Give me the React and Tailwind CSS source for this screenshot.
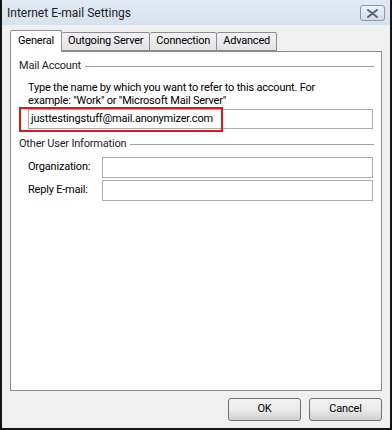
import React from 'react';

const font = { fontFamily: 'Roboto, "Noto Sans", sans-serif' };

function Tab({ label, active }) {
  return active ? (
    <div className="relative z-10 -mb-px h-[22px] px-[7px] border border-b-0 border-[#898c95] bg-white rounded-t-[2px] flex items-center text-[11px] tracking-[-0.2px] text-black">
      {label}
    </div>
  ) : (
    <div className="mt-[2px] h-[19px] px-[6px] border border-[#898c95] border-l-0 bg-gradient-to-b from-[#f2f2f2] to-[#e3e3e3] rounded-t-[2px] flex items-center text-[11px] tracking-[-0.2px] text-black">
      {label}
    </div>
  );
}

function GroupLabel({ children }) {
  return (
    <div className="h-[14px] flex items-center gap-[4px] pr-[7px]">
      <span className="text-[11px] tracking-[-0.2px] leading-[14px] text-[#1e1e1e] whitespace-nowrap">{children}</span>
      <div className="flex-1 h-px bg-[#a0a0a0]" />
    </div>
  );
}

function Field({ label }) {
  return (
    <div className="flex items-center">
      <span className="w-[83px] pl-[9px] text-[11px] tracking-[-0.2px] text-black whitespace-nowrap">{label}</span>
      <div className="flex-1 h-[21px] border border-[#abadb3] bg-white" />
    </div>
  );
}

export default function App() {
  return (
    <div
      className="w-[392px] h-[430px] bg-[#f0f0f0] border-l-2 border-r-2 border-b-2 border-[#141414] flex flex-col overflow-hidden"
      style={font}
    >
      {/* Title bar */}
      <div className="h-[25px] bg-gradient-to-b from-[#e2eaf3] to-[#d7e2ed] flex items-center justify-between pl-[5px] pr-[5px]">
        <span className="text-[12px] text-[#1c1c1c]">Internet E-mail Settings</span>
        <div className="w-[25px] h-[16px] mt-[1px] border border-[#8a96a5] rounded-[3px] bg-gradient-to-b from-[#eef3f8] to-[#d3dde8] flex items-center justify-center">
          <svg width="11" height="9" viewBox="0 0 11 9">
            <path d="M1 1 L10 8 M10 1 L1 8" stroke="#5a6470" strokeWidth="2" strokeLinecap="round" fill="none" />
          </svg>
        </div>
      </div>

      {/* Tabs + panel */}
      <div className="px-[8px] pt-[5px]">
        <div className="flex items-end">
          <Tab label="General" active />
          <Tab label="Outgoing Server" />
          <Tab label="Connection" />
          <Tab label="Advanced" />
        </div>
        <div className="h-[340px] w-[372px] border border-[#898c95] bg-white pl-[8px] pt-[7px]">
          <GroupLabel>Mail Account</GroupLabel>
          <div className="pl-[9px] pr-[8px] pt-[8px]">
            <p className="text-[11px] tracking-[-0.2px] leading-[13px] text-black whitespace-nowrap">
              Type the name by which you want to refer to this account. For
              <br />
              example: "Work" or "Microsoft Mail Server"
            </p>
            <div className="relative mt-[2px] h-[20px] border border-[#abadb3] bg-white px-[2px] flex items-center text-[11px] tracking-[-0.2px] text-black">
              justtestingstuff@mail.anonymizer.com
              <div className="absolute -left-[10px] -top-[3px] w-[204px] h-[25px] border-2 border-[#e4141c]" />
            </div>
          </div>
          <div className="pt-[8px]">
            <GroupLabel>Other User Information</GroupLabel>
          </div>
          <div className="pt-[6px] pr-[8px] flex flex-col gap-[2px]">
            <Field label="Organization:" />
            <Field label="Reply E-mail:" />
          </div>
        </div>
      </div>

      {/* Buttons */}
      <div className="flex justify-end gap-[8px] pr-[8px] pt-[7px]">
        <button className="w-[73px] h-[23px] border border-[#707070] rounded-[3px] bg-gradient-to-b from-[#f2f2f2] via-[#ebebeb] to-[#cfcfcf] text-[11px] tracking-[-0.2px] text-black">
          OK
        </button>
        <button className="w-[73px] h-[23px] border border-[#707070] rounded-[3px] bg-gradient-to-b from-[#f2f2f2] via-[#ebebeb] to-[#cfcfcf] text-[11px] tracking-[-0.2px] text-black">
          Cancel
        </button>
      </div>
    </div>
  );
}
